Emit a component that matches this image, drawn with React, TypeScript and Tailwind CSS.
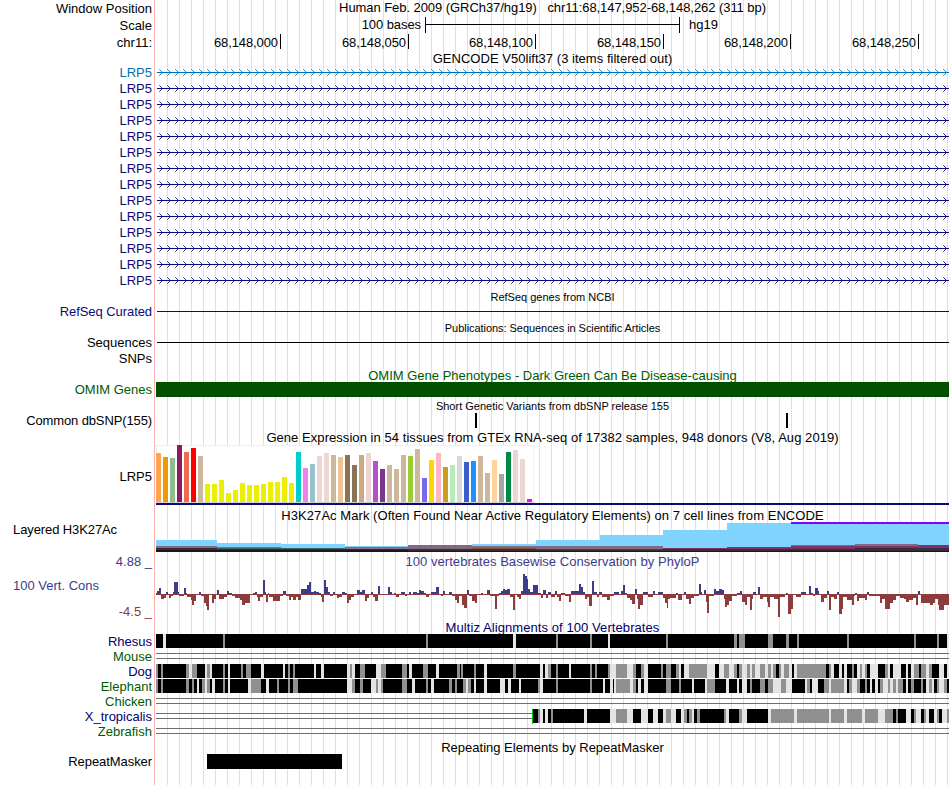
import React from "react";
import clsx from "clsx";

// every plot uses image coordinates: the data area runs from x=156 to x=949
const X0 = 156;
const X1 = 949;
const WIDTH = X1 - X0;

const BLUE = "#3c3c8c";
const RED = "#8c3c3c";

const positions = [
  { label: "68,148,000", cell: "w-[125px]" },
  { label: "68,148,050", cell: "w-[128px]" },
  { label: "68,148,100", cell: "w-[127px]" },
  { label: "68,148,150", cell: "w-[128px]" },
  { label: "68,148,200", cell: "w-[127px]" },
  { label: "68,148,250", cell: "w-[128px]" },
];

// [height, color] per tissue
const TAN = "#cdb79e";
const gtex: [number, string][] = [
  [49, "#ffa54f"], [45, "#ee9a00"], [44, "#8fbc8f"], [57, "#8b1c62"], [50, "#ee6a50"], [54, "#ff0000"],
  [46, TAN], [18, "#eeee00"], [18, "#eeee00"], [22, "#eeee00"], [9, "#eeee00"], [12, "#eeee00"],
  [19, "#eeee00"], [17, "#eeee00"], [17, "#eeee00"], [18, "#eeee00"], [20, "#eeee00"], [20, "#eeee00"],
  [25, "#eeee00"], [19, "#eeee00"], [50, "#00cdcd"], [34, "#ee82ee"], [38, "#9ac0cd"], [46, "#eed5d2"],
  [49, "#eed5d2"], [47, TAN], [45, "#eec591"], [47, "#8b7355"], [37, "#8b7355"], [47, "#cdaa7d"],
  [49, "#eed5d2"], [41, "#b452cd"], [33, "#7a378b"], [37, TAN], [33, TAN], [47, TAN],
  [46, "#9acd32"], [53, TAN], [24, "#7a67ee"], [42, "#ffd700"], [49, "#ffb6c1"], [35, "#cd9b1d"],
  [37, "#b4eeb4"], [46, "#d9d9d9"], [40, "#3a5fcd"], [41, "#1e90ff"], [46, TAN], [29, TAN],
  [42, "#ffd39b"], [28, "#a6a6a6"], [50, "#008b45"], [52, "#eed5d2"], [43, "#eed5d2"], [3, "#ff00ff"],
];

// layered histogram: x start, x end, then [top, color] bands from back to front
const h3k27: [number, number, [number, string][]][] = [
  [156, 217, [[18, "#80d2ff"], [24, "#806b82"], [26, "#382c30"], [28, "#1e1420"]]],
  [217, 281, [[21, "#80d2ff"], [25, "#806b82"], [26, "#406464"], [27, "#382c30"], [28, "#1e1420"]]],
  [281, 345, [[22, "#80d2ff"], [26, "#406464"], [27, "#382c30"], [28, "#1e1420"]]],
  [345, 408, [[24, "#80d2ff"], [25, "#806b82"], [27, "#382c30"], [28, "#1e1420"]]],
  [408, 472, [[23, "#806b82"], [27, "#382c30"], [29, "#1e1420"]]],
  [472, 536, [[22, "#80d2ff"], [24, "#806b82"], [26, "#80503c"], [27, "#382c30"], [29, "#1e1420"]]],
  [536, 600, [[18, "#80d2ff"], [24, "#806b82"], [27, "#782c30"], [28, "#382c30"], [29, "#1e1420"]]],
  [600, 663, [[13, "#80d2ff"], [24, "#806b82"], [27, "#782c30"], [28, "#382c30"], [29, "#1e1420"]]],
  [663, 727, [[8, "#80d2ff"], [26, "#803264"], [27, "#382c30"], [29, "#1e1420"]]],
  [727, 791, [[1, "#80d2ff"], [25, "#803264"], [27, "#382c30"], [29, "#1e1420"]]],
  [791, 855, [[0, "#8000ff"], [2, "#80d2ff"], [23, "#806b82"], [24, "#803264"], [27, "#382c30"], [29, "#1e1420"]]],
  [855, 918, [[0, "#8000ff"], [2, "#80d2ff"], [22, "#806b82"], [24, "#803264"], [26, "#382c40"], [28, "#382c30"], [29, "#1e1420"]]],
  [918, 949, [[0, "#8000ff"], [2, "#80d2ff"], [23, "#803264"], [26, "#382c50"], [28, "#382c30"], [29, "#1e1420"]]],
];

// "x:score" steps, each one lasts until the next x
const phyloP = `
156:1 157:3 159:6 161:-5 164:-4 166:2 168:-1 169:-4 171:-2 173:2 174:12 178:2 179:-2 184:6 186:1 187:-3 191:-6
192:-11 194:-7 196:-1 199:2 201:-2 204:-9 206:-12 207:-16 209:-1 212:-9 214:-5 216:-1 217:4 219:-5 224:-3 227:3
229:1 232:-2 235:-4 240:-6 242:-11 245:-9 250:-1 253:1 255:2 257:-3 258:-7 260:-3 263:14 265:2 266:-8 268:1 269:-3
273:-7 280:-2 283:3 286:-2 289:-6 291:-3 293:-6 296:-3 298:-6 301:5 307:9 309:12 311:2 314:3 316:2
319:1 321:-3 322:-8 324:14 326:7 328:2 330:-2 333:2 335:-1 337:-4 339:-3 342:2 345:1 347:-9 349:-6 351:-3 354:-1
357:4 360:2 362:4 365:-7 367:-4 369:-1 371:2 373:-3 375:-7 378:8 380:-1 388:7 390:2 392:-1 394:1 396:-3 399:-1
401:2 405:-2 407:-1 409:2 411:-1 413:2 417:1 419:4 421:3 424:1 426:-3 429:-1 431:2 436:7 439:-1 441:-2 443:3
445:-1 449:2 452:-2 455:-6 457:-9 459:-2 462:-11 464:-14 467:4 469:-2 472:-7 475:-9 477:-1 481:1 483:-1 487:4
490:-2 495:-15 497:-2 499:1 501:3 503:5 505:4 507:5 510:-3 513:-16 515:-1 517:-3 519:-5 521:3 523:20 525:18
527:15 528:5 530:2 533:9 538:1 541:-4 543:4 546:-4 548:2 551:-3 555:3 557:-3 559:-7 561:1 565:-2 569:-8 571:3
575:3 579:10 581:7 583:2 585:-5 587:-3 589:-12 592:13 594:2 597:-3 599:2 602:-3 607:-6 610:-2 614:2 619:-1 621:3
623:9 625:1 627:-4 630:-6 632:-10 635:5 637:-5 638:-15 640:-11 643:2 648:-3 653:3 655:-1 658:2 663:-4 665:-9
667:-14 668:-5 670:-4 676:1 678:-6 682:-1 684:2 686:-5 689:-10 691:-4 694:-2 699:10 701:2 702:-1 704:4 706:-8
707:-19 709:-2 714:5 716:3 719:5 722:4 724:-5 725:-13 727:-11 729:-7 732:-2 737:1 740:3 742:-8 745:-11 747:-3
750:-16 752:-5 753:2 756:-1 758:7 760:-5 763:-3 767:-8 768:-13 770:-3 774:-5 778:-23 780:-3 785:-1 786:1 788:-20
791:-15 793:-1 796:-3 801:2 806:-1 809:8 811:1 813:-2 815:6 818:3 819:-1 821:-8 824:-4 827:3 829:-16 831:-3
834:-5 837:2 839:-20 842:-15 843:-3 847:-6 852:-11 854:-2 855:1 857:-7 859:-4 865:-6 867:2 869:-2 880:-9 882:-5
885:-15 890:-9 893:-6 896:-2 900:-4 904:-5 906:-8 909:-6 913:-4 916:-11 918:3 920:-1 921:-9 930:-11 933:-9
935:-5 938:-11 939:-16 944:-11 949:0`;

// alignment quality: k = black, g = gray, w = light, followed by the x where it starts
const alignments: Record<string, string> = {
  Rhesus: `k156 w163 k166 g223 k225 g426 k428 w513 k516 g556 k558 g590 k592 w608 k610 g666 k668 g734 k737 g739 k745
    g768 k773 g786 k789 g797 k799 g847 k849 g914 k916 g937 k939 w947`,
  Dog: `g156 k158 g161 k163 g186 w189 g192 k197 w205 g207 w210 k212 g223 k225 w228 k230 g241 k243 g246 k251 w261
    k264 w283 k285 g288 k290 g293 k295 w314 k316 w321 k324 w347 g350 w352 k355 g360 k365 w376 g381 k386 g402 k407
    w409 k412 g423 k428 w436 k439 g457 k460 g461 k463 g474 k476 w484 k487 g513 k516 w540 k543 w545 g548 k551 g556
    k558 w569 k571 g590 k592 g595 k597 g608 w610 g616 w627 g633 k636 g641 w644 k648 g661 k663 g666 k671 g676 w679
    k681 w684 g689 w707 k715 w719 g724 w729 g734 k737 g739 w742 g747 w750 g752 w755 g760 w765 g768 w771 g773 k776
    g779 w781 g784 w789 k792 w794 g797 k826 g829 w831 k834 w839 k842 w844 k847 g852 k854 w857 g860 w862 g865 k867
    w870 k878 g885 w888 k890 w893 k901 w906 k908 w911 g914 k919 g921 w926 g929 k932 w939 k944 w947`,
  Elephant: `g156 k158 g161 k163 g186 k189 g192 k194 w197 k199 g202 w205 g207 k210 w212 k215 g223 k225 w228 k230
    w248 g251 k261 w266 k269 g277 k279 g288 k290 g293 k298 w347 g352 k355 g360 k363 w371 g376 w378 g381 k383 g402
    k407 w412 k415 g426 k428 w431 k434 g449 k452 g455 k457 g463 w466 g468 k471 w474 k476 w484 k487 w500 k505 w508
    k511 w519 k521 g538 w540 k543 g556 k558 g590 k592 w603 k605 w610 k613 w614 g616 w630 g633 k636 w638 k641 w644
    k648 g666 k671 g679 k681 w692 k694 w705 g707 k715 w726 k729 w737 k739 w742 k747 g750 k752 g760 k765 g768 w773
    g781 w786 k792 w805 g807 k810 w812 k818 g824 w829 g831 w844 k847 g849 w852 g857 k860 g865 k867 w870 k872 w875
    k878 g880 w883 g888 w890 g893 w896 g898 k903 w906 k908 g911 k914 g921 k923 w926 g929 w932 k934 g937 w939 g944 k947`,
  X_tropicalis: `k533 g538 w540 k543 w545 k548 g551 k553 w584 k587 w610 g616 w627 k633 w641 k648 w653 k658 w663 g666
    w671 k676 w681 g684 k687 g689 w692 k694 g697 k700 g724 w726 k729 g739 w742 k747 w768 g771 w794 g797 w829 g831
    w844 g847 w862 g865 w878 g885 k893 g896 k898 w906 k911 g914 w916 k921 g924 w926 k929 w934 g937 k939 w942 g947`,
};

const shades: Record<string, string> = { k: "#000000", g: "#909090", w: "#e4e4e4" };

const Plot = ({ height, children }: { height: number; children: React.ReactNode }) => (
  <svg width={WIDTH} height={height} viewBox={`${X0} 0 ${WIDTH} ${height}`} shapeRendering="crispEdges" className="block">
    {children}
  </svg>
);

const Row = ({ label, className, labelClass, children }: {
  label?: React.ReactNode;
  className: string;
  labelClass?: string;
  children?: React.ReactNode;
}) => (
  <div className={clsx("flex", className)}>
    <div className={clsx("w-[156px] shrink-0 whitespace-pre pr-1 text-right", labelClass)}>{label}</div>
    <div className="w-[793px] shrink-0">{children}</div>
  </div>
);

const Title = ({ className, children }: { className?: string; children: React.ReactNode }) => (
  <div className={clsx("whitespace-pre text-center", className)}>{children}</div>
);

const Gene = ({ color }: { color: string }) => {
  let heads = "";
  let tails = "";
  for (let x = 159; x < X1 - 3; x += 8) {
    heads += `M${x + 1} 6h1v1h-1zM${x + 2} 7h1v1h-1zM${x + 3} 8h1v1h-1zM${x + 2} 9h1v1h-1zM${x + 1} 10h1v1h-1z`;
    tails += `M${x} 5h1v1h-1zM${x} 11h1v1h-1z`;
  }
  return (
    <Plot height={16}>
      <rect x={157} y={8} width={792} height={1} fill={color} />
      <path d={heads} fill={color} fillOpacity={0.85} />
      <path d={tails} fill={color} fillOpacity={0.6} />
    </Plot>
  );
};

const Conservation = () => {
  const steps = phyloP.trim().split(/\s+/).map((s) => s.split(":").map(Number));
  return (
    <Plot height={50}>
      {steps.slice(0, -1).map(([x, v], i) => (
        <rect key={x} x={x} y={v > 0 ? 24 - v : 24} width={steps[i + 1][0] - x} height={Math.abs(v)} fill={v > 0 ? BLUE : RED} />
      ))}
      <rect x={156} y={24} width={793} height={1} fill={RED} />
    </Plot>
  );
};

const Alignment = ({ species }: { species: string }) => {
  const runs = (alignments[species] || "").split(/\s+/).filter(Boolean);
  return (
    <Plot height={15}>
      {(!runs.length || species === "X_tropicalis") && (
        <path d={`M156 4.5H${runs.length ? 532 : 949}M156 9.5H${runs.length ? 532 : 949}`} stroke="#6e6e6e" />
      )}
      {runs.map((run, i) => {
        const x = Number(run.slice(1));
        const end = i + 1 < runs.length ? Number(runs[i + 1].slice(1)) : X1;
        return <rect key={x} x={x} y={0} width={end - x} height={14} fill={shades[run[0]]} />;
      })}
      {species === "X_tropicalis" && <rect x={532} y={0} width={1} height={15} fill="#00c800" />}
    </Plot>
  );
};

const species = [
  { name: "Rhesus", color: "text-[#00006e]" },
  { name: "Mouse", color: "text-[#005a00]" },
  { name: "Dog", color: "text-[#00006e]" },
  { name: "Elephant", color: "text-[#005a00]" },
  { name: "Chicken", color: "text-[#005a00]" },
  { name: "X_tropicalis", color: "text-[#00006e]" },
  { name: "Zebrafish", color: "text-[#005a00]" },
];

export default function App() {
  return (
    <div className="h-[785px] w-[950px] overflow-hidden bg-white font-['Liberation_Sans',Arial,sans-serif] text-[13px] text-black">
      <div className="flex h-full bg-[linear-gradient(#ffb4b4,#ffb4b4)] bg-[length:1px_100%] bg-[position:154px_0] bg-no-repeat">
        <div className="h-full w-[156px] shrink-0" />
        <div className="h-full w-[793px] bg-[repeating-linear-gradient(to_right,transparent_0_11px,#dcdcff_11px_12px)]" />
      </div>
      <div className="relative -mt-[785px]">
        <Row label="Window Position" className="h-[17px] leading-[17px]">
          <Title className="leading-[16px] tracking-[-0.06px]">{"Human Feb. 2009 (GRCh37/hg19)   chr11:68,147,952-68,148,262 (311 bp)"}</Title>
        </Row>
        <Row label="Scale" className="h-[17px] leading-[17px]">
          <div className="flex">
            <div className="w-[269px] pr-1 text-right leading-[16px] tracking-[-0.08px]">100 bases</div>
            <svg width="255" height="17" shapeRendering="crispEdges">
              <path d="M0.5 0V16M0 7.5H255M254.5 0V16" stroke="#000" />
            </svg>
            <div className="pl-[9px] leading-[16px]">hg19</div>
          </div>
        </Row>
        <Row label="chr11:" className="h-4 leading-[18px]">
          <div className="flex">
            {positions.map(({ label, cell }) => (
              <div key={label} className={clsx("h-[15px] border-r border-black pr-[2px] text-right tracking-[-0.1px]", cell)}>{label}</div>
            ))}
          </div>
        </Row>
        <Row className="h-3.5 leading-[18px]">
          <Title className="tracking-[0.03px]">GENCODE V50lift37 (3 items filtered out)</Title>
        </Row>
        {Array.from({ length: 14 }, (_, i) => (
          <Row key={i} label="LRP5" className="h-4 leading-[17px]" labelClass={i ? "text-[#0c0c78]" : "text-[#0072b2]"}>
            <Gene color={i ? "#0c0c78" : "#0072b2"} />
          </Row>
        ))}
        <Row className="h-[15px] text-[11px] leading-[19px]">
          <Title>RefSeq genes from NCBI</Title>
        </Row>
        <Row label="RefSeq Curated" className="h-4 leading-[17px]" labelClass="text-[#0c0c78] tracking-[-0.07px]">
          <Plot height={16}><rect x={157} y={8} width={792} height={1} fill="#0c0c78" /></Plot>
        </Row>
        <Row className="h-[15px] text-[11px] leading-[19px]">
          <Title className="tracking-[-0.05px]">Publications: Sequences in Scientific Articles</Title>
        </Row>
        <Row label="Sequences" className="h-4 leading-[17px]">
          <Plot height={16}><rect x={157} y={8} width={792} height={1} fill="#000" /></Plot>
        </Row>
        <Row label="SNPs" className="h-4 leading-[17px]" />
        <Row className="h-4 leading-[19px] text-[#005a00]">
          <Title>OMIM Gene Phenotypes - Dark Green Can Be Disease-causing</Title>
        </Row>
        <Row label="OMIM Genes" className="h-[15px] leading-[15px]" labelClass="text-[#005a00]">
          <div className="h-[15px] bg-[#005000]" />
        </Row>
        <Row className="h-4 text-[11px] leading-[19px]">
          <Title>Short Genetic Variants from dbSNP release 155</Title>
        </Row>
        <Row label="Common dbSNP(155)" className="h-4 leading-4" labelClass="tracking-[-0.12px]">
          <Plot height={15}>
            <rect x={475} y={0} width={2} height={15} fill="#000" />
            <rect x={786} y={0} width={2} height={15} fill="#000" />
          </Plot>
        </Row>
        <Row className="h-4 leading-[17px]">
          <Title className="tracking-[0.055px]">Gene Expression in 54 tissues from GTEx RNA-seq of 17382 samples, 948 donors (V8, Aug 2019)</Title>
        </Row>
        <Row label="LRP5" className="h-[61px] leading-[63px]">
          <Plot height={61}>
            <rect x={156.5} y={0.5} width={377} height={57} fill="#fff" stroke="#f0f0f0" />
            {gtex.map(([h, fill], i) => (
              <rect key={i} x={156 + i * 7} y={57 - h} width={5} height={h} fill={fill} />
            ))}
            <rect x={156} y={57} width={378} height={1} fill="#d2d2d2" />
            <rect x={156} y={58} width={793} height={2} fill="#0c0c78" />
          </Plot>
        </Row>
        <Row className="h-4 leading-[19px]">
          <Title className="tracking-[0.055px]">H3K27Ac Mark (Often Found Near Active Regulatory Elements) on 7 cell lines from ENCODE</Title>
        </Row>
        <Row
          label={<div className="pl-[13px] text-left tracking-[-0.1px]">Layered H3K27Ac</div>}
          className="h-[30px] leading-4"
        >
          <Plot height={30}>
            {h3k27.map(([start, end, bands]) =>
              bands.map(([top, fill]) => (
                <rect key={`${start}-${top}`} x={start} y={top} width={end - start} height={30 - top} fill={fill} />
              ))
            )}
          </Plot>
        </Row>
        <Row label="4.88 _" className="h-[18px] leading-[20px] text-[#3c3c8c]">
          <Title className="tracking-[0.04px]">100 vertebrates Basewise Conservation by PhyloP</Title>
        </Row>
        <Row
          className="h-[50px] leading-[16px]"
          label={
            <div className="flex h-full flex-col justify-between pt-2">
              <div className="pl-[13px] text-left text-[#3c3c8c]">100 Vert. Cons</div>
              <div className="text-[#8c3c3c]">-4.5 _</div>
            </div>
          }
        >
          <Conservation />
        </Row>
        <Row className="h-3.5 leading-[16px] text-[#00006e]">
          <Title className="tracking-[0.08px]">Multiz Alignments of 100 Vertebrates</Title>
        </Row>
        {species.map(({ name, color }) => (
          <Row key={name} label={name} className="h-[15px] leading-[15px]" labelClass={color}>
            <Alignment species={name} />
          </Row>
        ))}
        <Row className="h-[15px] leading-[17px]">
          <Title>Repeating Elements by RepeatMasker</Title>
        </Row>
        <Row label="RepeatMasker" className="h-[15px] leading-[15px]" labelClass="tracking-[-0.07px]">
          <Plot height={15}><rect x={207} y={0} width={135} height={15} fill="#000" /></Plot>
        </Row>
      </div>
    </div>
  );
}
